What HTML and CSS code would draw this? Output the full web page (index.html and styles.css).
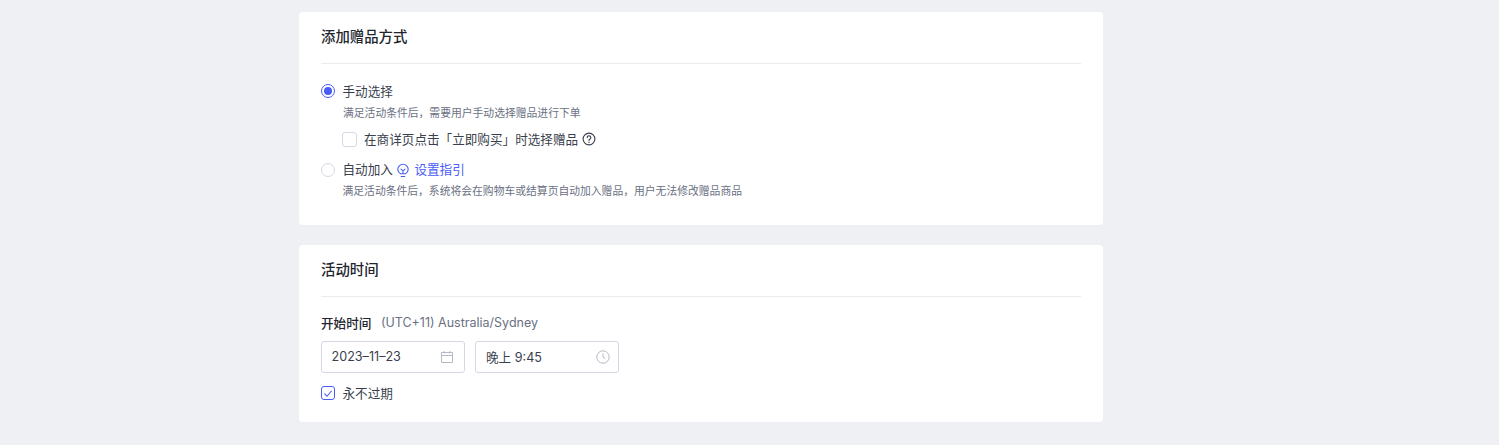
FILE: index.html
```html
<!DOCTYPE html>
<html lang="zh-CN">
<head>
    <meta charset="UTF-8">
    <title>添加赠品方式</title>
    <link rel="stylesheet" href="styles.css">
</head>
<body>
    <div class="container">
        <div class="card card-method">
            <div class="card-title">添加赠品方式</div>
            <div class="card-body">
                <div class="option">
                    <span class="radio radio-on"></span>
                    <span class="label">手动选择</span>
                </div>
                <div class="hint">满足活动条件后，需要用户手动选择赠品进行下单</div>
                <div class="sub-option">
                    <span class="checkbox"></span>
                    <span class="label">在商详页点击「立即购买」时选择赠品</span>
                    <svg class="icon-help" viewBox="0 0 14 14" fill="none" stroke="#3a3f4d" stroke-width="1.1">
                        <circle cx="7" cy="7" r="5.9"/>
                        <path d="M5.2 5.6a1.8 1.8 0 1 1 2.8 1.5c-.7.4-1 .7-1 1.3" stroke-linecap="round"/>
                        <circle cx="7" cy="10.2" r=".7" fill="#3a3f4d" stroke="none"/>
                    </svg>
                </div>
                <div class="option option-auto">
                    <span class="radio"></span>
                    <span class="label">自动加入</span>
                    <a class="guide" href="#">
                        <svg class="icon-bulb" viewBox="0 0 14 14" fill="none" stroke="#4a5cf6" stroke-width="1.1" stroke-linecap="round">
                            <path d="M4.6 10.2C3 9.3 1.8 8 1.8 6a5.2 5.2 0 0 1 10.4 0c0 2-1.2 3.3-2.8 4.2z"/>
                            <path d="M5.2 13h3.6"/>
                            <path d="M5 5.7 7 7.4l2-1.7M7 7.4v2.6"/>
                        </svg>
                        <span class="label">设置指引</span>
                    </a>
                </div>
                <div class="hint hint-auto">满足活动条件后，系统将会在购物车或结算页自动加入赠品，用户无法修改赠品商品</div>
            </div>
        </div>

        <div class="card card-time">
            <div class="card-title">活动时间</div>
            <div class="card-body">
                <div class="time-label">
                    <strong class="label">开始时间</strong>
                    <span class="label zone">(UTC+11) Australia/Sydney</span>
                </div>
                <div class="inputs">
                    <div class="input input-date">
                        <span class="label">2023–11–23</span>
                        <svg class="icon-input" viewBox="0 0 14 14" fill="none" stroke="#b4b9c6" stroke-width="1">
                            <path d="M1.5 2.5h11v10h-11z"/>
                            <path d="M1.5 5.5h11M4.2 1v2.4M9.8 1v2.4"/>
                        </svg>
                    </div>
                    <div class="input">
                        <span class="label">晚上 9:45</span>
                        <svg class="icon-input" viewBox="0 0 14 14" fill="none" stroke="#b4b9c6" stroke-width="1">
                            <circle cx="7" cy="7" r="6.2"/>
                            <path d="M7 3.4V7l2.2 1.8"/>
                        </svg>
                    </div>
                </div>
                <div class="never">
                    <span class="checkbox checkbox-on">
                        <svg viewBox="0 0 14 14" fill="none" stroke="#4a5cf6" stroke-width="1.3">
                            <path d="M2.8 7.2 5.9 10.2l5.3-6.4"/>
                        </svg>
                    </span>
                    <span class="label">永不过期</span>
                </div>
            </div>
        </div>
    </div>
</body>
</html>
```

FILE: styles.css
```css
* { box-sizing: border-box; }
html, body { height: 100%; }
body { margin: 0; background: #eff0f3; color: #3a3f4d; font-family: "Inter", "Noto Sans CJK SC", sans-serif; font-size: 12.6px; overflow: hidden; }
a { text-decoration: none; }
.container { width: 804px; margin-left: 299px; padding-top: 12px; }
.card { background: white; border-radius: 4px; padding: 0 22px; margin-bottom: 20px; }
.card-method { height: 213px; }
.card-time { height: 177px; }
.card-title { height: 52px; line-height: 50px; font-size: 14.4px; font-weight: 500; color: #22252e; border-bottom: 1px solid #e9ebef; }
.card-body { display: flex; flex-direction: column; }
.label { margin-top: -2px; }
.option { display: flex; align-items: center; gap: 7.5px; height: 18px; margin-top: 18px; }
.option-auto { margin-top: 13px; }
.option-auto .label { margin-top: -4px; }
.hint { margin: 6px 0 0 22px; height: 16px; line-height: 16px; font-size: 10.8px; color: #6b7183; }
.hint-auto { margin-top: 5px; margin-left: 21.5px; }
.sub-option { display: flex; align-items: center; gap: 7px; height: 18px; margin: 8px 0 0 21px; }
.radio { width: 14px; height: 14px; border: 1px solid #d5d8e4; border-radius: 50%; background: white; flex: none; display: flex; align-items: center; justify-content: center; }
.radio-on { border-color: #4a5cf6; }
.radio-on::after { content: ""; width: 8px; height: 8px; border-radius: 50%; background: #4a5cf6; }
.checkbox { width: 15px; height: 15px; border: 1px solid #d5d8e4; border-radius: 3px; background: white; flex: none; display: flex; align-items: center; justify-content: center; }
.checkbox svg { width: 13px; height: 13px; }
.checkbox-on { width: 14px; height: 14px; border-color: #4a5cf6; }
.icon-help { width: 14px; height: 14px; margin-left: -3px; }
.guide { display: flex; align-items: center; gap: 4px; color: #4a5cf6; margin-left: -4px; }
.icon-bulb { width: 14px; height: 15px; flex: none; }
.time-label { display: flex; align-items: center; gap: 10px; height: 18px; margin-top: 17px; }
.time-label strong { font-weight: 500; color: #22252e; }
.zone { color: #6b7183; font-size: 12.5px; margin-left: -0.5px; }
.inputs { display: flex; gap: 10px; margin-top: 9px; }
.input { width: 144px; height: 32px; border: 1px solid #d5d8e4; border-radius: 3px; padding: 0 8px 0 10px; display: flex; align-items: center; justify-content: space-between; }
.input-date { padding: 0 10px 0 9.5px; }
.icon-input { width: 14px; height: 14px; }
.never { display: flex; align-items: center; gap: 7.5px; height: 18px; margin-top: 11px; }
```
